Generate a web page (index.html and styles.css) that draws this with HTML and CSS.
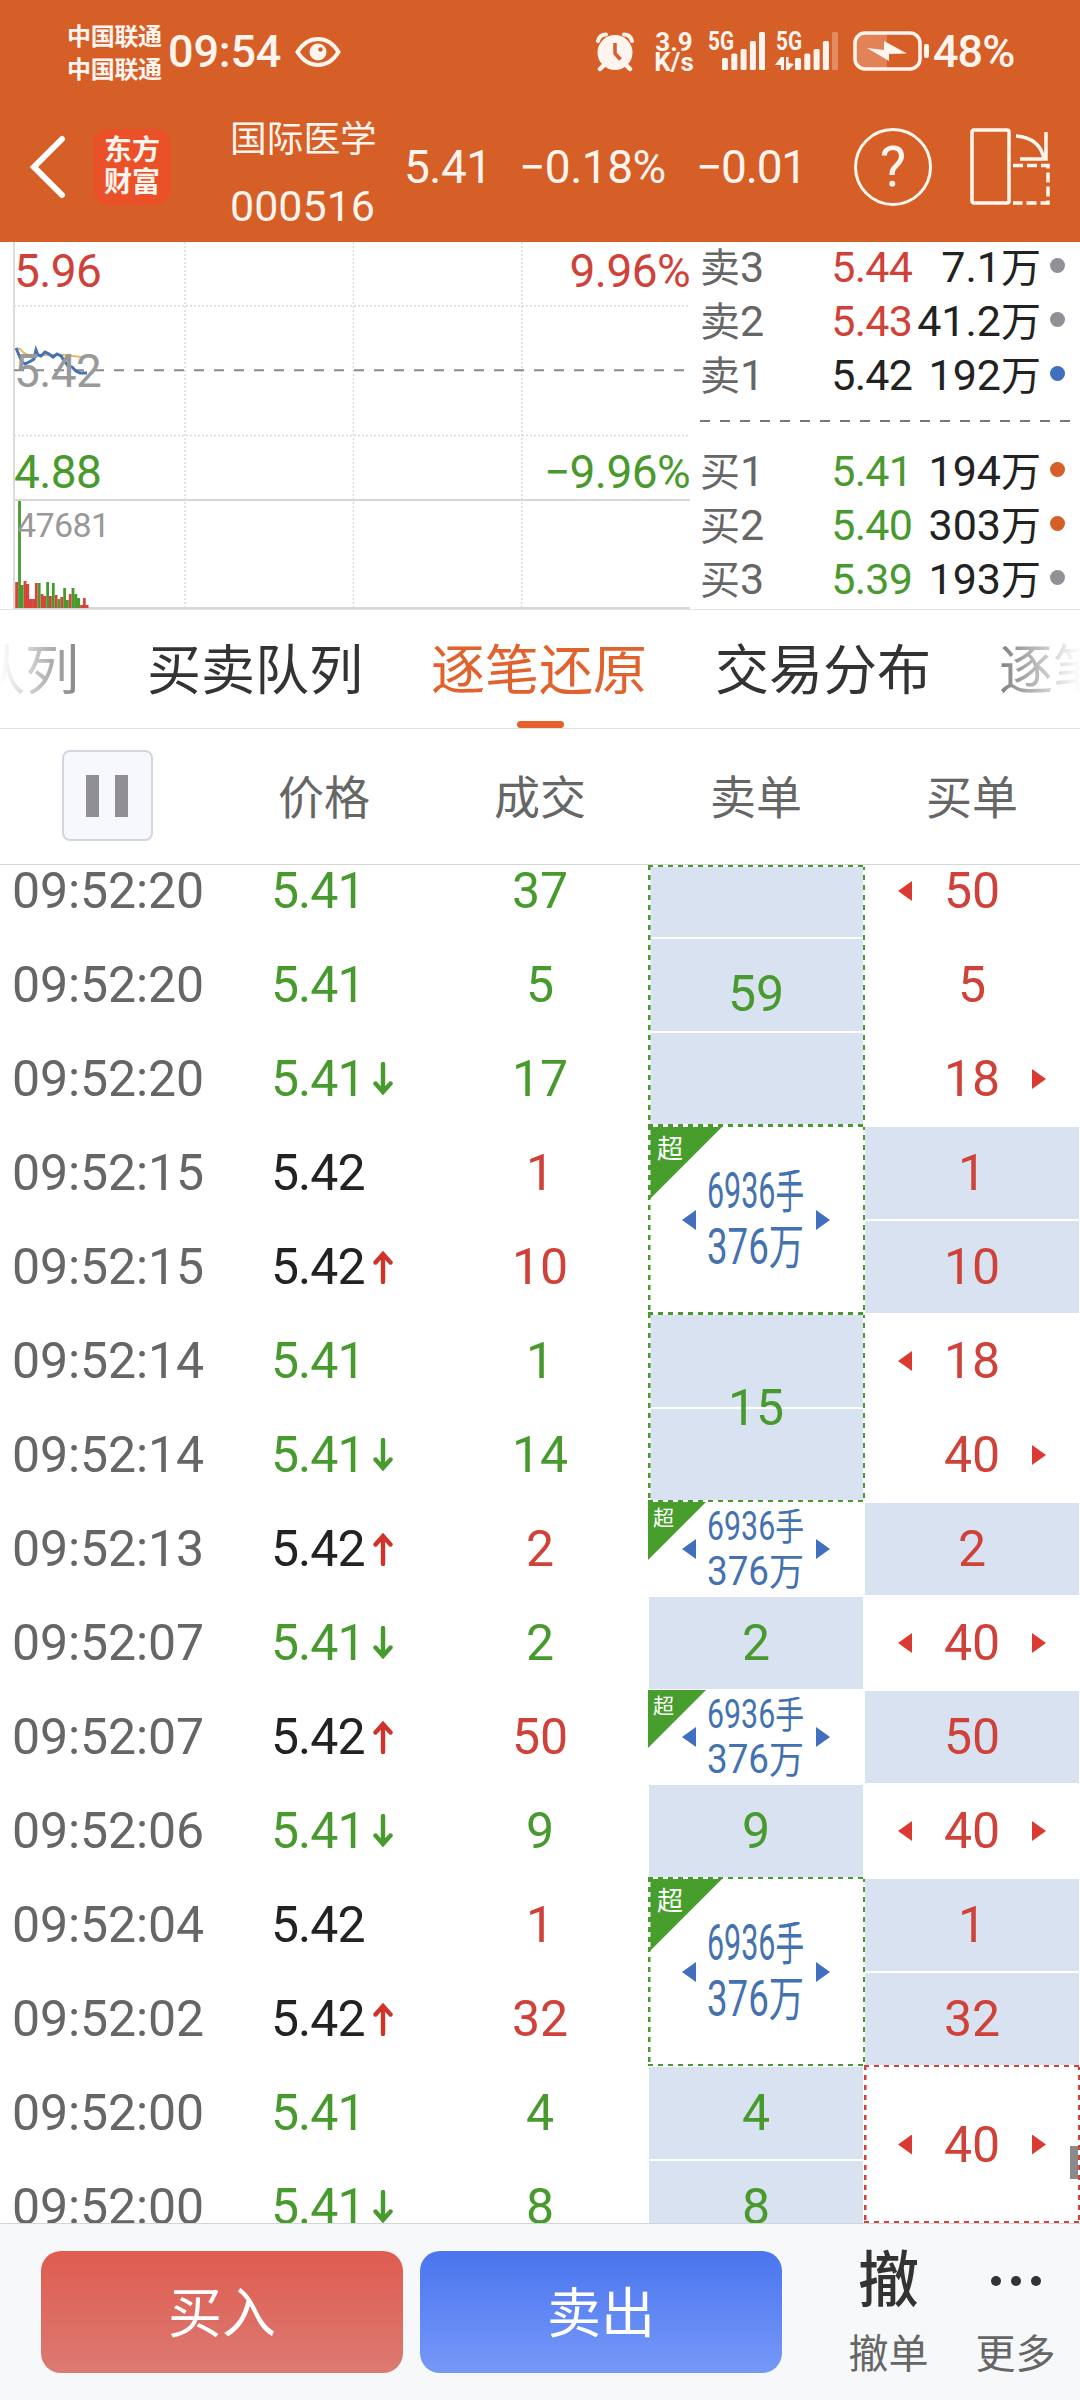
FILE: index.html
```html
<!DOCTYPE html>
<html lang="zh-CN">

<head>
  <meta charset="UTF-8">
  <meta name="viewport" content="width=device-width, initial-scale=1.0">
  <title>国际医学 000516</title>
  <link rel="stylesheet" href="styles.css">
</head>

<body>
  <!-- shared icons -->
  <svg class="sprite">
    <symbol id="up" viewBox="0 0 20 34">
      <path d="M10 32V4M2.500 12.500L10 4l7.500 8.500" />
    </symbol>
    <symbol id="down" viewBox="0 0 20 34">
      <path d="M10 2v28M2.500 21.500L10 30l7.500-8.500" />
    </symbol>
    <symbol id="big" viewBox="0 0 100 100">
      <text x="0" y="38" textLength="97" lengthAdjust="spacingAndGlyphs" font-size="50">6936<tspan font-size="47">手</tspan></text>
      <text x="0" y="93.500" textLength="97" lengthAdjust="spacingAndGlyphs" font-size="50">376<tspan font-size="48">万</tspan></text>
    </symbol>
    <symbol id="small" viewBox="0 0 100 84">
      <text x="0" y="31" textLength="97" lengthAdjust="spacingAndGlyphs" font-size="40">6936<tspan font-size="38">手</tspan></text>
      <text x="0" y="76" textLength="97" lengthAdjust="spacingAndGlyphs" font-size="40">376<tspan font-size="38">万</tspan></text>
    </symbol>
  </svg>

  <div class="container">
    <header class="header">
      <div class="status">
        <div class="carrier">
          <p>中国联通</p>
          <p>中国联通</p>
        </div>
        <p class="clock">09:54</p>
        <svg class="eye" width="46" height="32" viewBox="0 0 46 32">
          <path d="M2.500 16C8 7 15 3 23 3s15 4 20.500 13C38 25 31 29 23 29S8 25 2.500 16z" fill="none" stroke="#fff4ee" stroke-width="4" />
          <circle cx="23" cy="16" r="8.500" fill="#fff4ee" />
          <circle cx="25.500" cy="13.500" r="2.200" fill="#d65f28" />
        </svg>
        <svg class="alarm" width="38" height="40" viewBox="0 0 38 40">
          <g fill="none" stroke="#fff4ee" stroke-linecap="round">
            <path d="M2 9C3 5 6 2.500 10 2.500M36 9c-1-4-4-6.500-8-6.500" stroke-width="4" />
            <path d="M8 33l-4 4M30 33l4 4" stroke-width="4.500" />
          </g>
          <circle cx="19" cy="20.500" r="17.500" fill="#fff4ee" />
          <path d="M19 11v10.500l5.500 6" fill="none" stroke="#d65f28" stroke-width="3.500" />
        </svg>
        <div class="speed">
          <p>3.9</p>
          <p>K/s</p>
        </div>
        <svg class="signal" width="126" height="42" viewBox="0 0 126 42" fill="#fff4ee">
          <text x="0" y="20" textLength="26" lengthAdjust="spacingAndGlyphs">5G</text>
          <rect x="14" y="28" width="6" height="12" rx="1.500" />
          <rect x="23.300" y="23.500" width="6" height="16.500" rx="1.500" />
          <rect x="32.600" y="19" width="6" height="21" rx="1.500" />
          <rect x="41.900" y="11" width="6" height="29" rx="1.500" />
          <rect x="51" y="2" width="6" height="38" rx="1.500" />
          <text x="68" y="20" textLength="26" lengthAdjust="spacingAndGlyphs">5G</text>
          <path d="M67 35l6-8h3v13h-3v-5zM86 34l-5.500 6H78V27h2.500v6z" />
          <rect x="87" y="28" width="6" height="12" rx="1.500" />
          <rect x="96.300" y="23.500" width="6" height="16.500" rx="1.500" />
          <rect x="105.600" y="19" width="6" height="21" rx="1.500" />
          <rect x="114.900" y="11" width="6" height="29" rx="1.500" />
          <rect x="124" y="2" width="6" height="38" rx="1.500" opacity=".3" />
        </svg>
        <svg class="battery" width="78" height="40" viewBox="0 0 78 40">
          <path d="M12 3h22v34H12a9 9 0 0 1-9-9V12a9 9 0 0 1 9-9z" fill="#e28357" />
          <rect x="2" y="2" width="65" height="36" rx="10" fill="none" stroke="#fff4ee" stroke-width="3.500" />
          <rect x="71" y="13" width="5" height="14" rx="2" fill="#fff4ee" />
          <path d="M14 17l17 2v-9l23 12.500-18 .5v7z" fill="#fff4ee" />
        </svg>
        <p class="percent">48%</p>
      </div>

      <div class="nav">
        <svg class="back" width="36" height="64" viewBox="0 0 36 64">
          <path d="M32 4L4 32l28 28" fill="none" stroke="#fff" stroke-width="6" stroke-linecap="round" />
        </svg>
        <div class="logo">
          <p>东方</p>
          <p>财富</p>
        </div>
        <div class="stock">
          <p class="name">国际医学</p>
          <p class="code">000516</p>
        </div>
        <p class="quote price">5.41</p>
        <p class="quote rate">−0.18%</p>
        <p class="quote diff">−0.01</p>
        <div class="help">?</div>
        <svg class="rotate" width="82" height="78" viewBox="0 0 82 78" fill="none" stroke="#fff6ee" stroke-width="3.500">
          <rect x="2" y="2" width="37" height="73" rx="2" />
          <path d="M46 8c14 1 25 8 28 23M76 4v27H50" />
          <path d="M43 37.500h35v37.500H43" stroke-dasharray="10 4" />
        </svg>
      </div>
    </header>

    <section class="market">
      <div class="chart">
        <svg width="690" height="367" viewBox="0 242 690 367">
          <g fill="none" stroke="#d9d9d9" stroke-width="1.500" stroke-dasharray="2 2">
            <path d="M14 305.700h676M14 435.500h676M185 242v366M353.500 242v366M521.700 242v366" />
          </g>
          <path d="M14 242v367" stroke="#dcdcdc" stroke-width="2" />
          <path d="M14 500h676M14 608h676" stroke="#d8d8d8" stroke-width="2" />
          <path d="M14 370.300h676" stroke="#8a8a8a" stroke-width="2" stroke-dasharray="10 10" />
          <polyline points="17,348 20,349 24,353 28,355 65,355 73,356 81,357 87,357" fill="none" stroke="#e8b95e" stroke-width="2" />
          <polyline points="16,348 19,355 22,362 25,364 31,361 34,359 36,350 38,355 41,356 45,352 49,354 53,357 57,354 61,356 65,362 68,366 72,367 76,371 80,373 87,373" fill="none" stroke="#4472b8" stroke-width="3" />
          <path class="bar-up" d="M16.600 608v-26M25 608v-27M27.800 608v-24M30.600 608v-9M33.500 608v-9M36.300 608v-25M42 608v-14M44.800 608v-12M50.400 608v-12M56.100 608v-13M61.700 608v-11M70.200 608v-14M81.500 608v-3M84.300 608v-10M87.100 608v-3" />
          <path class="bar-down" d="M19.500 608v-107M22.200 608v-23M39.200 608v-25M47.600 608v-26M53.300 608v-25M58.900 608v-9M64.600 608v-20M67.400 608v-8M73 608v-20M75.900 608v-14M78.700 608v-10" />
        </svg>
        <p class="label top red">5.96</p>
        <p class="label top end red">9.96%</p>
        <p class="label mid">5.42</p>
        <p class="label low green">4.88</p>
        <p class="label low end green">−9.96%</p>
        <p class="label vol">47681</p>
      </div>
      <div class="book">
        <div class="level"><p><span>卖</span>3</p><b class="red">5.44</b><em>7.1<span>万</span></em><i></i></div>
        <div class="level"><p><span>卖</span>2</p><b class="red">5.43</b><em>41.2<span>万</span></em><i></i></div>
        <div class="level"><p><span>卖</span>1</p><b>5.42</b><em>192<span>万</span></em><i class="dot-blue"></i></div>
        <div class="divider"></div>
        <div class="level"><p><span>买</span>1</p><b class="green">5.41</b><em>194<span>万</span></em><i class="dot-orange"></i></div>
        <div class="level"><p><span>买</span>2</p><b class="green">5.40</b><em>303<span>万</span></em><i class="dot-orange"></i></div>
        <div class="level"><p><span>买</span>3</p><b class="green">5.39</b><em>193<span>万</span></em><i></i></div>
      </div>
    </section>

    <nav class="tabs">
      <a>买卖队列</a>
      <a>买卖队列</a>
      <a class="active">逐笔还原</a>
      <a>交易分布</a>
      <a>逐笔成交</a>
    </nav>

    <div class="thead">
      <div><button type="button" class="pause"></button></div>
      <div>价格</div>
      <div>成交</div>
      <div>卖单</div>
      <div>买单</div>
    </div>

    <div class="ticks">
      <div class="col time">
        <p>09:52:20</p>
        <p>09:52:20</p>
        <p>09:52:20</p>
        <p>09:52:15</p>
        <p>09:52:15</p>
        <p>09:52:14</p>
        <p>09:52:14</p>
        <p>09:52:13</p>
        <p>09:52:07</p>
        <p>09:52:07</p>
        <p>09:52:06</p>
        <p>09:52:04</p>
        <p>09:52:02</p>
        <p>09:52:00</p>
        <p>09:52:00</p>
      </div>
      <div class="col deal">
        <p class="green">5.41</p>
        <p class="green">5.41</p>
        <p class="green">5.41<svg><use href="#down" /></svg></p>
        <p>5.42</p>
        <p>5.42<svg><use href="#up" /></svg></p>
        <p class="green">5.41</p>
        <p class="green">5.41<svg><use href="#down" /></svg></p>
        <p>5.42<svg><use href="#up" /></svg></p>
        <p class="green">5.41<svg><use href="#down" /></svg></p>
        <p>5.42<svg><use href="#up" /></svg></p>
        <p class="green">5.41<svg><use href="#down" /></svg></p>
        <p>5.42</p>
        <p>5.42<svg><use href="#up" /></svg></p>
        <p class="green">5.41</p>
        <p class="green">5.41<svg><use href="#down" /></svg></p>
      </div>
      <div class="col volume">
        <p class="green">37</p>
        <p class="green">5</p>
        <p class="green">17</p>
        <p class="red">1</p>
        <p class="red">10</p>
        <p class="green">1</p>
        <p class="green">14</p>
        <p class="red">2</p>
        <p class="green">2</p>
        <p class="red">50</p>
        <p class="green">9</p>
        <p class="red">1</p>
        <p class="red">32</p>
        <p class="green">4</p>
        <p class="green">8</p>
      </div>
      <div class="col sell green">
        <div class="lot rows3 striped framed first"><p>59</p></div>
        <div class="lot rows2 framed super">
          <span class="corner">超</span>
          <svg class="amount"><use href="#big" /></svg>
          <span class="left"></span><span class="right"></span>
        </div>
        <div class="lot rows2 striped framed"><p>15</p></div>
        <div class="lot super mini">
          <span class="corner">超</span>
          <svg class="amount"><use href="#small" /></svg>
          <span class="left"></span><span class="right"></span>
        </div>
        <div class="lot striped"><p>2</p></div>
        <div class="lot super mini">
          <span class="corner">超</span>
          <svg class="amount"><use href="#small" /></svg>
          <span class="left"></span><span class="right"></span>
        </div>
        <div class="lot striped"><p>9</p></div>
        <div class="lot rows2 framed super">
          <span class="corner">超</span>
          <svg class="amount"><use href="#big" /></svg>
          <span class="left"></span><span class="right"></span>
        </div>
        <div class="lot striped"><p>4</p></div>
        <div class="lot striped"><p>8</p></div>
      </div>
      <div class="col buy red">
        <div class="lot"><span class="left"></span><p>50</p></div>
        <div class="lot"><p>5</p></div>
        <div class="lot"><p>18</p><span class="right"></span></div>
        <div class="lot striped"><p>1</p></div>
        <div class="lot striped"><p>10</p></div>
        <div class="lot"><span class="left"></span><p>18</p></div>
        <div class="lot"><p>40</p><span class="right"></span></div>
        <div class="lot striped"><p>2</p></div>
        <div class="lot"><span class="left"></span><p>40</p><span class="right"></span></div>
        <div class="lot striped"><p>50</p></div>
        <div class="lot"><span class="left"></span><p>40</p><span class="right"></span></div>
        <div class="lot striped"><p>1</p></div>
        <div class="lot striped"><p>32</p></div>
        <div class="lot framed last"><span class="left"></span><p>40</p><span class="right"></span></div>
      </div>
      <div class="scrollbar"></div>
    </div>

    <footer class="footer">
      <button type="button" class="btn buyBtn">买入</button>
      <button type="button" class="btn sellBtn">卖出</button>
      <div class="action cancel">
        <p class="icon">撤</p>
        <p>撤单</p>
      </div>
      <div class="action">
        <p class="icon dots"><i></i><i></i><i></i></p>
        <p>更多</p>
      </div>
    </footer>
  </div>
</body>

</html>
```
FILE: styles.css
```css
* {
  padding: 0;
  margin: 0;
  box-sizing: border-box;
}

body {
  width: 1080px;
  font-family: Roboto, "Noto Sans CJK SC", sans-serif;
  color: #222;
  background-color: #fff;
}

button {
  border: none;
  font-family: inherit;
}

.sprite {
  display: none;
}

.container {
  width: 1080px;
  height: 2400px;
  display: flex;
  flex-direction: column;
  overflow: hidden;
}

.red {
  color: #cf423a;
}

.green {
  color: #489a2e;
}

/* header */
.header {
  height: 242px;
  background-color: #d65f28;
  color: #fff4ee;
}

.status {
  height: 102px;
  display: flex;
  align-items: center;
  padding-left: 67px;
}

.carrier {
  width: 101px;
  padding-top: 5px;
  font-size: 24px;
  line-height: 33px;
  font-weight: 700;
  letter-spacing: -0.3px;
}

.clock {
  width: 111px;
  font-size: 45px;
  font-weight: 500;
  letter-spacing: -0.2px;
}

.eye {
  margin: 2px 0 0 16px;
}

.alarm {
  margin: 2px 0 0 255px;
}

.speed {
  width: 42px;
  margin-left: 19px;
  padding-top: 1px;
  text-align: center;
  font-size: 26px;
  line-height: 20px;
  font-weight: 700;
}

.signal {
  margin-left: 13px;
  font-size: 26px;
  font-weight: 700;
  overflow: visible;
}

.battery {
  margin-left: 19px;
}

.percent {
  margin-left: 2px;
  font-size: 45px;
  font-weight: 500;
  letter-spacing: -1px;
}

.nav {
  height: 140px;
  display: flex;
  align-items: center;
  padding: 0 0 10px 30px;
}

.nav svg {
  flex-shrink: 0;
}

.logo {
  width: 76px;
  height: 76px;
  margin-left: 28px;
  padding-top: 6px;
  border-radius: 14px;
  background-color: #ea5128;
  text-align: center;
  font-size: 28px;
  line-height: 32px;
  font-weight: 700;
}

.stock {
  width: 146px;
  margin-left: 60px;
  padding-top: 14px;
  white-space: nowrap;
}

.name {
  font-size: 36.7px;
  line-height: 66px;
  height: 66px;
  margin-top: -3px;
}

.code {
  font-size: 43px;
  line-height: 66px;
}

.quote {
  font-size: 46px;
  letter-spacing: -0.5px;
  white-space: nowrap;
}

.price {
  width: 115px;
  margin-left: 28px;
}

.rate {
  width: 177px;
}

.diff {
  width: 158px;
  letter-spacing: -1.2px;
}

.help {
  width: 78px;
  height: 78px;
  border: 3px solid #fff6ee;
  border-radius: 50%;
  text-align: center;
  font-size: 56px;
  line-height: 72px;
  font-weight: 400;
}

.rotate {
  margin-left: 38px;
}

/* chart and order book */
.market {
  height: 368px;
  display: flex;
  border-bottom: 1px solid #e2e2e2;
}

.chart {
  position: relative;
  width: 690px;
}

.chart svg {
  display: block;
}

.bar-up {
  stroke: #d8433a;
  stroke-width: 2.8px;
}

.bar-down {
  stroke: #489a2e;
  stroke-width: 2.8px;
}

.label {
  position: absolute;
  left: 14px;
  font-size: 46px;
  line-height: 46px;
  letter-spacing: -0.6px;
}

.label.end {
  left: auto;
  right: 0;
}

.label.top {
  top: 6px;
}

.label.mid {
  top: 106px;
  color: #999;
}

.label.low {
  top: 207px;
}

.label.vol {
  top: 260px;
  left: 17px;
  font-size: 34px;
  color: #999;
}

.book {
  width: 380px;
  margin: -2px 0 0 10px;
}

.level {
  height: 54px;
  display: flex;
  align-items: center;
  font-size: 43px;
  line-height: 54px;
  white-space: nowrap;
}

.level span {
  font-size: 40px;
  line-height: 1px;
}

.level p {
  width: 116px;
  color: #666;
}

.level b {
  width: 96px;
  text-align: right;
  font-weight: 400;
  letter-spacing: -0.8px;
}

.level em {
  width: 129px;
  text-align: right;
  font-style: normal;
}

.level i {
  width: 15px;
  height: 15px;
  margin: -3px 0 0 9px;
  border-radius: 50%;
  background-color: #909096;
}

.level .dot-blue {
  background-color: #4070bd;
}

.level .dot-orange {
  background-color: #d65f28;
}

.divider {
  width: 370px;
  height: 2px;
  margin: 18px 0 22px;
  background: repeating-linear-gradient(to right, #777 0 10px, transparent 10px 20px);
}

/* tabs */
.tabs {
  position: relative;
  height: 119px;
  display: flex;
  justify-content: center;
  gap: 68px;
  overflow: hidden;
  border-bottom: 1px solid #e2e2e2;
  font-size: 54px;
  line-height: 123px;
  color: #333;
}

.tabs a {
  flex-shrink: 0;
  position: relative;
  height: 118px;
  left: -1px;
}

.tabs .active {
  color: #e0622c;
}

.tabs .active::after {
  content: "";
  position: absolute;
  left: 86px;
  bottom: 0;
  width: 47px;
  height: 7px;
  border-radius: 4px;
  background-color: #e5602a;
}

.tabs::before,
.tabs::after {
  content: "";
  position: absolute;
  z-index: 1;
  top: 0;
  left: 0;
  width: 130px;
  height: 100%;
  background: linear-gradient(to right, #fff, rgba(255, 255, 255, 0));
}

.tabs::after {
  left: auto;
  right: 0;
  transform: scaleX(-1);
}

/* table */
.thead {
  height: 136px;
  display: flex;
  border-bottom: 1px solid #d5d5d5;
  font-size: 46px;
  line-height: 138px;
  color: #666;
}

.thead div {
  width: 216px;
  height: 135px;
  text-align: center;
}

.thead div:first-child {
  display: flex;
  align-items: center;
  justify-content: center;
}

.pause {
  width: 91px;
  height: 91px;
  display: flex;
  align-items: center;
  justify-content: center;
  gap: 16px;
  margin: 0 2px 2px 0;
  border: 2px solid #d4d6df;
  border-radius: 8px;
  background-color: #f7f8fb;
}

.pause::before,
.pause::after {
  content: "";
  width: 13px;
  height: 42px;
  background-color: #8f8f95;
}

.ticks {
  position: relative;
  height: 1358px;
  display: flex;
  align-items: flex-start;
  overflow: hidden;
  font-size: 50px;
  line-height: 94px;
}

.col {
  width: 216px;
  margin-top: -21px;
}

.col>p {
  height: 94px;
}

.time {
  padding-left: 12px;
  color: #666;
  letter-spacing: -0.1px;
}

.deal {
  padding-left: 55px;
  letter-spacing: -1px;
}

.deal>p {
  display: flex;
}

.deal svg {
  position: absolute;
  left: 373px;
  width: 20px;
  height: 34px;
  margin-top: 30px;
  fill: none;
  stroke: #cf342a;
  stroke-width: 4.4px;
  stroke-linecap: round;
}

.deal .green svg {
  stroke: #489a2e;
}

.volume {
  text-align: center;
}

.lot {
  --line: #489a2e;
  position: relative;
  height: 94px;
  display: flex;
  align-items: center;
  justify-content: center;
}

.rows2 {
  height: 188px;
}

.rows3 {
  height: 282px;
}

.striped {
  background: repeating-linear-gradient(to bottom, #fff 0 1px, #d9e2f0 1px 93px, #fff 93px 94px);
  border: solid #fff;
  border-width: 0 1px;
}

.first {
  padding-top: 18px;
}

.buy .last {
  --line: #cf423a;
  height: 157px;
}

/* dashed outline round an order filled over several rows */
.framed::after {
  content: "";
  position: absolute;
  z-index: 1;
  inset: -1px -1px 0 0;
  background:
    repeating-linear-gradient(to right, var(--line) 0 5px, #fff 5px 10px) top / 100% 2px no-repeat,
    repeating-linear-gradient(to right, var(--line) 0 5px, #fff 5px 10px) bottom / 100% 2px no-repeat,
    repeating-linear-gradient(to bottom, var(--line) 0 5px, #fff 5px 10px) left / 2.5px 100% no-repeat,
    repeating-linear-gradient(to bottom, var(--line) 0 5px, #fff 5px 10px) right / 2.5px 100% no-repeat;
}

.first::after {
  top: 21px;
}

.striped.framed::after {
  left: -1px;
  right: -2px;
}

.buy .framed::after {
  right: 0;
}

.corner {
  position: absolute;
  top: 0;
  left: 0;
  width: 75px;
  height: 75px;
  padding: 5px 0 0 9px;
  background-color: #489e2d;
  clip-path: polygon(0 0, 100% 0, 0 100%);
  font-size: 26px;
  line-height: 36px;
  color: #fff;
}

.mini .corner {
  width: 58px;
  height: 58px;
  padding: 1px 0 0 5px;
  font-size: 21px;
  line-height: 30px;
}

.amount {
  position: absolute;
  left: 59px;
  top: 44px;
  width: 100px;
  height: 100px;
  fill: #4472b0;
}

.mini .amount {
  top: 7px;
  height: 84px;
}

.left,
.right {
  position: absolute;
  top: calc(50% - 10px);
  width: 14px;
  height: 20px;
  background-color: #db3a32;
}

.super .left,
.super .right {
  background-color: #4070bd;
}

.left {
  left: 34px;
  clip-path: polygon(100% 0, 100% 100%, 0 50%);
}

.right {
  right: 34px;
  clip-path: polygon(0 0, 0 100%, 100% 50%);
}

.scrollbar {
  position: absolute;
  right: 2px;
  top: 1281px;
  width: 8px;
  height: 33px;
  background-color: #8a8a8a;
}

/* footer */
.footer {
  height: 177px;
  display: flex;
  align-items: flex-start;
  padding: 27px 0 0 41px;
  border-top: 1px solid #d3d6d9;
  background-color: #f7f8fa;
}

.btn {
  width: 362px;
  height: 122px;
  margin-right: 17px;
  padding-bottom: 5px;
  border-radius: 20px;
  font-size: 54px;
  color: #fff;
}

.buyBtn {
  background: linear-gradient(#df5c50, #dc7a72);
}

.sellBtn {
  background: linear-gradient(#4a75ee, #7698f8);
}

.action {
  width: 127px;
  text-align: center;
  font-size: 40px;
  line-height: 60px;
  color: #666;
}

.cancel {
  margin-left: 26px;
}

.icon {
  height: 74px;
  font-size: 61px;
  line-height: 61px;
  font-weight: 500;
  color: #333;
}

.dots {
  display: flex;
  justify-content: center;
  gap: 10px;
  padding-top: 25px;
}

.dots i {
  width: 10px;
  height: 10px;
  border-radius: 50%;
  background-color: #333;
}
```
